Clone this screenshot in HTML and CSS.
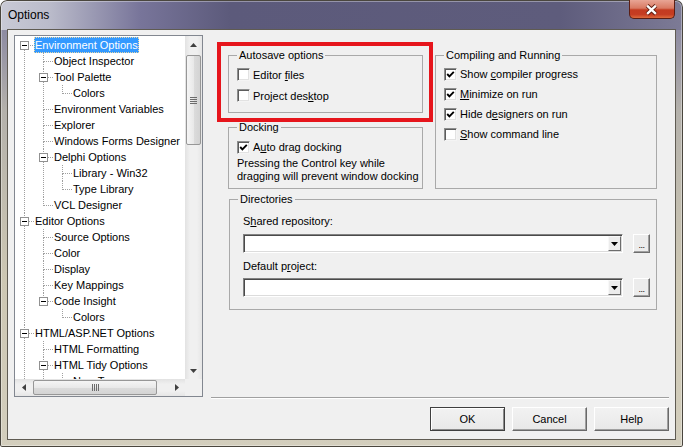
FILE: index.html
```html
<!DOCTYPE html>
<html lang="en">
<head>
    <meta charset="UTF-8">
    <title>Options</title>
    <link rel="stylesheet" href="styles.css">
</head>
<body>
<div class="window">
    <div class="titlebar">
        <span class="title">Options</span>
        <span class="close-btn">
            <svg width="46" height="19" viewBox="0 0 46 19">
                <path d="M18.5 5.5 L27.5 14 M27.5 5.5 L18.5 14" stroke="#5a1a0e" stroke-width="4.2"/>
                <path d="M18.5 5.5 L27.5 14 M27.5 5.5 L18.5 14" stroke="#fff" stroke-width="2.4"/>
            </svg>
        </span>
    </div>

    <div class="client">
        <!-- options tree -->
        <div class="tree">
            <div class="tree-view">
                <ul>
                    <li>
                        <span class="node sel"><i class="exp"></i><span class="label">Environment Options</span></span>
                        <ul>
                            <li><span class="node"><span class="label">Object Inspector</span></span></li>
                            <li>
                                <span class="node"><i class="exp"></i><span class="label">Tool Palette</span></span>
                                <ul>
                                    <li><span class="node"><span class="label">Colors</span></span></li>
                                </ul>
                            </li>
                            <li><span class="node"><span class="label">Environment Variables</span></span></li>
                            <li><span class="node"><span class="label">Explorer</span></span></li>
                            <li><span class="node"><span class="label">Windows Forms Designer</span></span></li>
                            <li>
                                <span class="node"><i class="exp"></i><span class="label">Delphi Options</span></span>
                                <ul>
                                    <li><span class="node"><span class="label">Library - Win32</span></span></li>
                                    <li><span class="node"><span class="label">Type Library</span></span></li>
                                </ul>
                            </li>
                            <li><span class="node"><span class="label">VCL Designer</span></span></li>
                        </ul>
                    </li>
                    <li>
                        <span class="node"><i class="exp"></i><span class="label">Editor Options</span></span>
                        <ul>
                            <li><span class="node"><span class="label">Source Options</span></span></li>
                            <li><span class="node"><span class="label">Color</span></span></li>
                            <li><span class="node"><span class="label">Display</span></span></li>
                            <li><span class="node"><span class="label">Key Mappings</span></span></li>
                            <li>
                                <span class="node"><i class="exp"></i><span class="label">Code Insight</span></span>
                                <ul>
                                    <li><span class="node"><span class="label">Colors</span></span></li>
                                </ul>
                            </li>
                        </ul>
                    </li>
                    <li class="more">
                        <span class="node"><i class="exp"></i><span class="label">HTML/ASP.NET Options</span></span>
                        <ul>
                            <li><span class="node"><span class="label">HTML Formatting</span></span></li>
                            <li class="more">
                                <span class="node"><i class="exp"></i><span class="label">HTML Tidy Options</span></span>
                                <ul>
                                    <li><span class="node"><span class="label">New Tags</span></span></li>
                                </ul>
                            </li>
                        </ul>
                    </li>
                </ul>
            </div>
            <div class="vscroll">
                <div class="arrow">
                    <svg width="7" height="4" viewBox="0 0 7 4"><path d="M0 4 L3.5 0 L7 4 Z" fill="#404040"/></svg>
                </div>
                <div class="vtrack">
                    <div class="vthumb">
                        <svg width="7" height="7" viewBox="0 0 7 7">
                            <path d="M0 0.5 H7 M0 2.5 H7 M0 4.5 H7 M0 6.5 H7" stroke="#6c6c6c"/>
                        </svg>
                    </div>
                </div>
                <div class="arrow">
                    <svg width="7" height="4" viewBox="0 0 7 4"><path d="M0 0 L3.5 4 L7 0 Z" fill="#404040"/></svg>
                </div>
            </div>
            <div class="hscroll">
                <div class="arrow">
                    <svg width="4" height="7" viewBox="0 0 4 7"><path d="M4 0 L0 3.5 L4 7 Z" fill="#404040"/></svg>
                </div>
                <div class="hthumb">
                    <svg width="7" height="7" viewBox="0 0 7 7">
                        <path d="M0.5 0 V7 M2.5 0 V7 M4.5 0 V7 M6.5 0 V7" stroke="#6c6c6c"/>
                    </svg>
                </div>
                <div class="htrack"></div>
                <div class="arrow">
                    <svg width="4" height="7" viewBox="0 0 4 7"><path d="M0 0 L4 3.5 L0 7 Z" fill="#404040"/></svg>
                </div>
            </div>
            <div class="corner"></div>
        </div>

        <div class="main">
            <div class="page">
                <div class="top-groups">
                    <div class="col-left">
                        <fieldset class="group autosave">
                            <legend>Autosave options</legend>
                            <div class="check"><span class="cb"></span><span>Editor <u>f</u>iles</span></div>
                            <div class="check"><span class="cb"></span><span>Project des<u>k</u>top</span></div>
                        </fieldset>
                        <fieldset class="group docking">
                            <legend>Docking</legend>
                            <div class="check"><span class="cb on"><svg width="9" height="9" viewBox="0 0 9 9"><polyline points="1.2,4 3.4,6.3 7.8,1.8" fill="none" stroke="#000" stroke-width="1.9"/></svg></span><span>A<u>u</u>to drag docking</span></div>
                            <div class="note">Pressing the Control key while<br>dragging will prevent window docking</div>
                        </fieldset>
                    </div>
                    <fieldset class="group compiling">
                        <legend>Compiling and Running</legend>
                        <div class="check"><span class="cb on"><svg width="9" height="9" viewBox="0 0 9 9"><polyline points="1.2,4 3.4,6.3 7.8,1.8" fill="none" stroke="#000" stroke-width="1.9"/></svg></span><span>Show <u>c</u>ompiler progress</span></div>
                        <div class="check"><span class="cb on"><svg width="9" height="9" viewBox="0 0 9 9"><polyline points="1.2,4 3.4,6.3 7.8,1.8" fill="none" stroke="#000" stroke-width="1.9"/></svg></span><span><u>M</u>inimize on run</span></div>
                        <div class="check"><span class="cb on"><svg width="9" height="9" viewBox="0 0 9 9"><polyline points="1.2,4 3.4,6.3 7.8,1.8" fill="none" stroke="#000" stroke-width="1.9"/></svg></span><span>Hide d<u>e</u>signers on run</span></div>
                        <div class="check"><span class="cb"></span><span><u>S</u>how command line</span></div>
                    </fieldset>
                </div>

                <fieldset class="group dirs">
                    <legend>Directories</legend>
                    <div class="field-label">S<u>h</u>ared repository:</div>
                    <div class="field-row">
                        <div class="combo">
                            <span class="drop"><svg width="7" height="4" viewBox="0 0 7 4"><path d="M0 0 L3.5 4 L7 0 Z" fill="#000"/></svg></span>
                        </div>
                        <span class="browse">...</span>
                    </div>
                    <div class="field-label second">Default p<u>r</u>oject:</div>
                    <div class="field-row last">
                        <div class="combo">
                            <span class="drop"><svg width="7" height="4" viewBox="0 0 7 4"><path d="M0 0 L3.5 4 L7 0 Z" fill="#000"/></svg></span>
                        </div>
                        <span class="browse">...</span>
                    </div>
                </fieldset>
            </div>
            <div class="separator"></div>
            <div class="buttons">
                <button class="btn default">OK</button>
                <button class="btn">Cancel</button>
                <button class="btn">Help</button>
            </div>
        </div>
    </div>

    <div class="annotation"></div>
</div>
</body>
</html>
```

FILE: styles.css
```css
* {
    box-sizing: border-box;
}
html, body {
    margin: 0;
    padding: 0;
}
body {
    font-family: "Liberation Sans", Arial, sans-serif;
    font-size: 11px;
    color: #000;
    background: #fff;
}

/* window frame */
.window {
    position: relative;
    width: 683px;
    height: 447px;
    padding: 0 7px 7px 7px;
    border-radius: 7px 7px 2px 2px;
    display: flex;
    flex-direction: column;
    background:
        linear-gradient(90deg, #c9cad6 0, #babbca 50px, #78759a 140px, #5c5a7b 230px, #5e5c7c 560px, #7d7b96 683px) top left / 100% 30px no-repeat,
        linear-gradient(#8d8ba2 30px, #b4b1ab 110px, #cdc7b3 280px, #d3cebd 100%);
    box-shadow: inset 0 0 0 1px #4a463e, inset 0 0 0 2px rgba(255, 255, 255, 0.35);
}
.titlebar {
    height: 29px;
    display: flex;
    justify-content: space-between;
    align-items: flex-start;
}
.title {
    font-size: 12px;
    line-height: 14px;
    padding: 8px 0 0 1px;
}
.close-btn {
    width: 46px;
    height: 19px;
    margin-right: 1px;
    border: 1px solid #5b1e14;
    border-top: none;
    border-radius: 0 0 5px 5px;
    background: linear-gradient(#e8a595 0%, #d97a63 45%, #c33b20 55%, #c53c22 80%, #dd6a3c 100%);
    display: flex;
}
.close-btn svg {
    margin-left: -1px;
}

.client {
    flex: 1;
    display: flex;
    padding: 5px 6px 8px 6px;
    border: 1px solid #5f5b52;
    background: #f0f0f0;
}

/* tree view */
.tree {
    width: 189px;
    height: 362px;
    flex: none;
    border: 1px solid #828790;
    background: #fff;
    display: grid;
    grid-template-columns: 1fr 17px;
    grid-template-rows: 1fr 17px;
}
.tree-view {
    overflow: hidden;
    padding-top: 1px;
}
.tree ul {
    list-style: none;
    margin: 0;
    padding: 0 0 0 19px;
}
.tree-view > ul {
    padding-left: 0;
}
.tree li {
    position: relative;
}
.tree li::before {
    content: "";
    position: absolute;
    left: 9px;
    top: 0;
    width: 9px;
    height: 8px;
    border-left: 1px dotted #a0a0a0;
    border-bottom: 1px dotted #a0a0a0;
}
.tree li:not(:last-child)::after,
.tree li.more::after {
    content: "";
    position: absolute;
    left: 9px;
    top: 8px;
    bottom: 0;
    border-left: 1px dotted #a0a0a0;
}
.tree-view > ul > li:first-child::before {
    border-left: none;
}
.node {
    display: block;
    height: 16px;
    line-height: 16px;
    padding-left: 19px;
    white-space: nowrap;
}
.label {
    display: inline-block;
    height: 16px;
    padding: 0 1px;
}
.node.sel .label {
    background: #3399ff;
    color: #fff;
    outline: 1px dotted #e9d9a8;
    outline-offset: -1px;
}
.exp {
    position: absolute;
    left: 5px;
    top: 4px;
    width: 9px;
    height: 9px;
    border: 1px solid #919191;
    background: #fff;
    z-index: 1;
}
.exp::after {
    content: "";
    position: absolute;
    left: 1px;
    top: 3px;
    width: 5px;
    height: 1px;
    background: #000;
}

/* scrollbars */
.vscroll {
    grid-column: 2;
    grid-row: 1;
    display: flex;
    flex-direction: column;
    background: linear-gradient(90deg, #e2e2e2, #f0f0f0 30%, #f0f0f0 70%, #e6e6e6);
}
.hscroll {
    grid-column: 1;
    grid-row: 2;
    display: flex;
    background: linear-gradient(#e2e2e2, #f0f0f0 30%, #f0f0f0 70%, #e6e6e6);
}
.arrow {
    width: 17px;
    height: 17px;
    flex: none;
    display: flex;
    align-items: center;
    justify-content: center;
}
.vtrack {
    flex: 1;
}
.vthumb {
    height: 90px;
    margin: 2px 1px 0 1px;
    border: 1px solid #979797;
    border-radius: 2px;
    background: linear-gradient(90deg, #f5f5f5, #e9e9e9 50%, #dcdcdc 51%, #d3d3d3);
    display: flex;
    align-items: center;
    justify-content: center;
}
.hthumb {
    width: 124px;
    margin: 1px 0 1px 1px;
    border: 1px solid #979797;
    border-radius: 2px;
    background: linear-gradient(#f5f5f5, #e9e9e9 50%, #dcdcdc 51%, #d3d3d3);
    display: flex;
    align-items: center;
    justify-content: center;
}
.htrack {
    flex: 1;
}
.corner {
    grid-column: 2;
    grid-row: 2;
    background: #f0f0f0;
}

/* right side */
.main {
    flex: 1;
    margin-left: 8px;
    display: flex;
    flex-direction: column;
}
.page {
    height: 362px;
    padding: 14px 0 0 17px;
}
.top-groups {
    display: grid;
    grid-template-columns: 195px 222px;
    column-gap: 12px;
}
.col-left {
    display: flex;
    flex-direction: column;
    gap: 8px;
}
.group {
    margin: 0;
    min-width: 0;
    padding: 3px 8px 6px 8px;
    border: 1px solid #a9a9a9;
}
.group legend {
    padding: 0 2px;
    line-height: 12px;
    font-size: 11px;
}
.check {
    display: flex;
    align-items: center;
    height: 20px;
    white-space: nowrap;
}
.autosave .check {
    height: 21px;
}
.docking {
    padding-top: 4px;
    padding-bottom: 5px;
}
.cb {
    width: 13px;
    height: 13px;
    flex: none;
    margin-right: 3px;
    background: #fff;
    border: 1px solid;
    border-color: #8e8f8f #f4f4f4 #f4f4f4 #8e8f8f;
    box-shadow: inset 1px 1px 0 #5c5c5c, inset -1px -1px 0 #e2e2e2;
    display: flex;
    align-items: center;
    justify-content: center;
}
.note {
    line-height: 13px;
    white-space: nowrap;
}

.dirs {
    width: 428px;
    margin: 4px 0 0 1px;
    padding: 10px 6px 12px 13px;
}
.dirs legend {
    margin-left: -5px;
}
.field-label {
    height: 13px;
    line-height: 13px;
}
.field-label.second {
    margin-top: 7px;
}
.field-row {
    display: flex;
    margin-top: 6px;
}
.field-row.last {
    margin-top: 5px;
}
.combo {
    width: 380px;
    height: 19px;
    background: #fff;
    border: 1px solid;
    border-color: #828282 #fff #fff #828282;
    box-shadow: inset 1px 1px 0 #4a4a4a, inset -1px -1px 0 #dcdcdc;
    padding: 1px;
    display: flex;
    justify-content: flex-end;
}
.drop {
    width: 13px;
    height: 15px;
    background: #ececec;
    border: 1px solid;
    border-color: #f8f8f8 #6d6d6d #6d6d6d #f8f8f8;
    display: flex;
    align-items: center;
    justify-content: center;
}
.browse {
    width: 17px;
    height: 19px;
    margin-left: 10px;
    background: #ececec;
    border: 1px solid;
    border-color: #fff #6d6d6d #6d6d6d #fff;
    box-shadow: inset -1px -1px 0 #a0a0a0;
    font-size: 9px;
    line-height: 20px;
    text-align: center;
    letter-spacing: -0.5px;
}

.separator {
    height: 2px;
    border-top: 1px solid #a0a0a0;
    border-bottom: 1px solid #fff;
}
.buttons {
    display: flex;
    justify-content: flex-end;
    gap: 7px;
    margin-top: 8px;
}
.btn {
    width: 75px;
    height: 24px;
    padding: 0;
    font-family: inherit;
    font-size: 11px;
    color: #000;
    background: linear-gradient(#f2f2f2, #e8e8e8);
    border: 1px solid;
    border-color: #fff #696969 #696969 #fff;
    box-shadow: inset -1px -1px 0 #a0a0a0;
}
.btn.default {
    border-color: #3f3f3f;
    box-shadow: inset 1px 1px 0 #fff, inset -1px -1px 0 #8a8a8a;
}

/* red annotation frame drawn over the dialog */
.annotation {
    position: absolute;
    left: 217px;
    top: 42px;
    width: 216px;
    height: 80px;
    border: 4px solid #e6151c;
}
```
